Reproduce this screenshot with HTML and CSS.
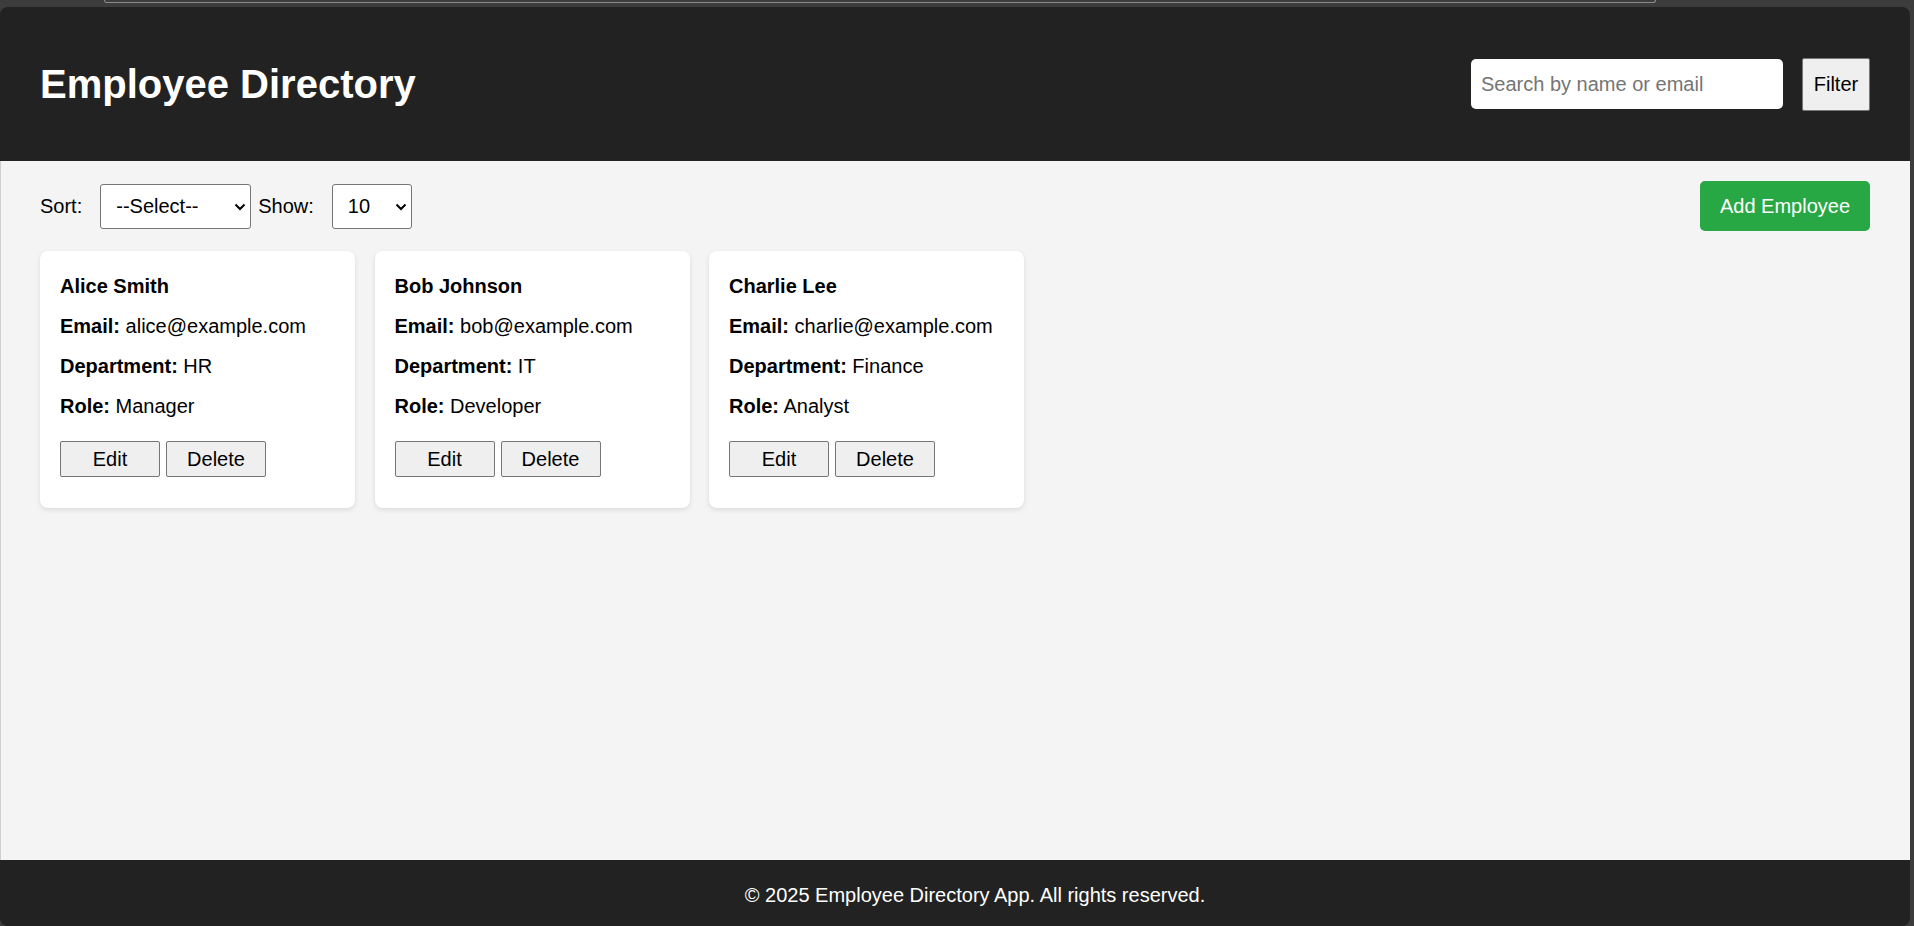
FILE: index.html
```html
<!DOCTYPE html>
<html lang="en">
<head>
<meta charset="utf-8">
<title>Employee Directory</title>
<link rel="stylesheet" href="styles.css">
</head>
<body>
<div class="chrome-top"><div class="tab-edge"></div></div>
<div class="app">
  <header class="header">
    <h1 class="title">Employee Directory</h1>
    <div class="search">
      <input class="search-input" type="text" placeholder="Search by name or email">
      <button class="btn filter-btn">Filter</button>
    </div>
  </header>
  <main class="main">
    <div class="toolbar">
      <div class="controls">
        <label class="ctl-label">Sort:</label>
        <span class="select-wrap sort-wrap">
          <select class="select"><option>--Select--</option></select>
          <svg class="chev" width="12" height="8" viewBox="0 0 12 8"><path d="M1.5 1.5 L6 6 L10.5 1.5" fill="none" stroke="#000" stroke-width="2"/></svg>
        </span>
        <label class="ctl-label show-label">Show:</label>
        <span class="select-wrap show-wrap">
          <select class="select"><option>10</option></select>
          <svg class="chev" width="12" height="8" viewBox="0 0 12 8"><path d="M1.5 1.5 L6 6 L10.5 1.5" fill="none" stroke="#000" stroke-width="2"/></svg>
        </span>
      </div>
      <button class="add-btn">Add Employee</button>
    </div>
    <div class="cards">
      <div class="card">
        <p class="name">Alice Smith</p>
        <p><strong>Email:</strong> alice@example.com</p>
        <p><strong>Department:</strong> HR</p>
        <p><strong>Role:</strong> Manager</p>
        <div class="actions"><button class="btn card-btn">Edit</button><button class="btn card-btn">Delete</button></div>
      </div>
      <div class="card">
        <p class="name">Bob Johnson</p>
        <p><strong>Email:</strong> bob@example.com</p>
        <p><strong>Department:</strong> IT</p>
        <p><strong>Role:</strong> Developer</p>
        <div class="actions"><button class="btn card-btn">Edit</button><button class="btn card-btn">Delete</button></div>
      </div>
      <div class="card">
        <p class="name">Charlie Lee</p>
        <p><strong>Email:</strong> charlie@example.com</p>
        <p><strong>Department:</strong> Finance</p>
        <p><strong>Role:</strong> Analyst</p>
        <div class="actions"><button class="btn card-btn">Edit</button><button class="btn card-btn">Delete</button></div>
      </div>
    </div>
  </main>
  <footer class="footer">© 2025 Employee Directory App. All rights reserved.</footer>
</div>
</body>
</html>
```

FILE: styles.css
```css
* { box-sizing: border-box; }
html, body { margin: 0; padding: 0; }
body {
  width: 1914px;
  height: 926px;
  overflow: hidden;
  background: #3c3c3c;
  font-family: "Liberation Sans", Arial, sans-serif;
  font-size: 20px;
  color: #000;
}
.chrome-top {
  height: 7px;
  padding-left: 104px;
}
.tab-edge {
  width: 1552px;
  height: 3px;
  border: 1px solid #8c8c8c;
  border-top: none;
  border-radius: 0 0 5px 5px;
}
.app {
  margin-right: 4px;
  height: 919px;
  display: flex;
  flex-direction: column;
  border-radius: 8px;
  overflow: hidden;
}
.header {
  height: 154px;
  flex: none;
  background: #222;
  color: #fff;
  display: flex;
  align-items: center;
  justify-content: space-between;
  padding: 0 40px;
}
.title {
  margin: 0;
  font-size: 40px;
  font-weight: bold;
  line-height: 46px;
}
.search {
  display: flex;
  align-items: center;
}
.search-input {
  width: 312px;
  height: 50px;
  border: none;
  border-radius: 5px;
  padding: 0 10px;
  font-family: inherit;
  font-size: 20px;
  color: #000;
  background: #fff;
  outline: none;
}
.search-input::placeholder { color: #757575; }
.btn {
  font-family: inherit;
  font-size: 20px;
  color: #000;
  background: #efefef;
  border: 1px solid #767676;
  border-radius: 2px;
  padding: 0;
  cursor: pointer;
}
.filter-btn {
  margin-left: 19px;
  width: 68px;
  height: 53px;
}
.main {
  flex: 1;
  background: #f4f4f4;
  border-left: 1px solid #cfcfcf;
  padding: 20px 40px 0 39px;
}
.toolbar {
  height: 50px;
  display: flex;
  align-items: center;
  justify-content: space-between;
}
.controls {
  display: flex;
  align-items: center;
}
.ctl-label {
  margin-right: 18px;
  line-height: 23px;
}
.show-label { margin-left: 7px; }
.select-wrap {
  position: relative;
  display: inline-block;
  height: 45px;
}
.sort-wrap { width: 151px; }
.show-wrap { width: 80px; }
.select {
  appearance: none;
  -webkit-appearance: none;
  width: 100%;
  height: 45px;
  border: 1px solid #767676;
  border-radius: 3px;
  background: #fff;
  padding: 0 0 0 15px;
  font-family: inherit;
  font-size: 20px;
  color: #000;
}
.chev {
  position: absolute;
  right: 5px;
  top: 19px;
  pointer-events: none;
}
.add-btn {
  width: 170px;
  height: 50px;
  background: #28a745;
  color: #fff;
  border: none;
  border-radius: 5px;
  font-family: inherit;
  font-size: 20px;
  padding: 0;
}
.cards {
  margin-top: 20px;
  display: flex;
  align-items: flex-start;
  gap: 19.5px;
}
.card {
  width: 315px;
  background: #fff;
  border-radius: 8px;
  box-shadow: 0 2px 5px rgba(0, 0, 0, 0.1);
  padding: 24.4px 20px 30.4px;
}
.card p {
  margin: 0 0 17px;
  line-height: 23px;
}
.card p:nth-last-of-type(1) { margin-bottom: 0; }
.card .name { font-weight: bold; }
.actions {
  margin-top: 23px;
  display: flex;
  gap: 6px;
}
.card-btn {
  width: 100px;
  height: 36px;
}
.footer {
  height: 66px;
  flex: none;
  background: #222;
  color: #fff;
  text-align: center;
  line-height: 23px;
  padding: 24px 0 0 40px;
}
```
